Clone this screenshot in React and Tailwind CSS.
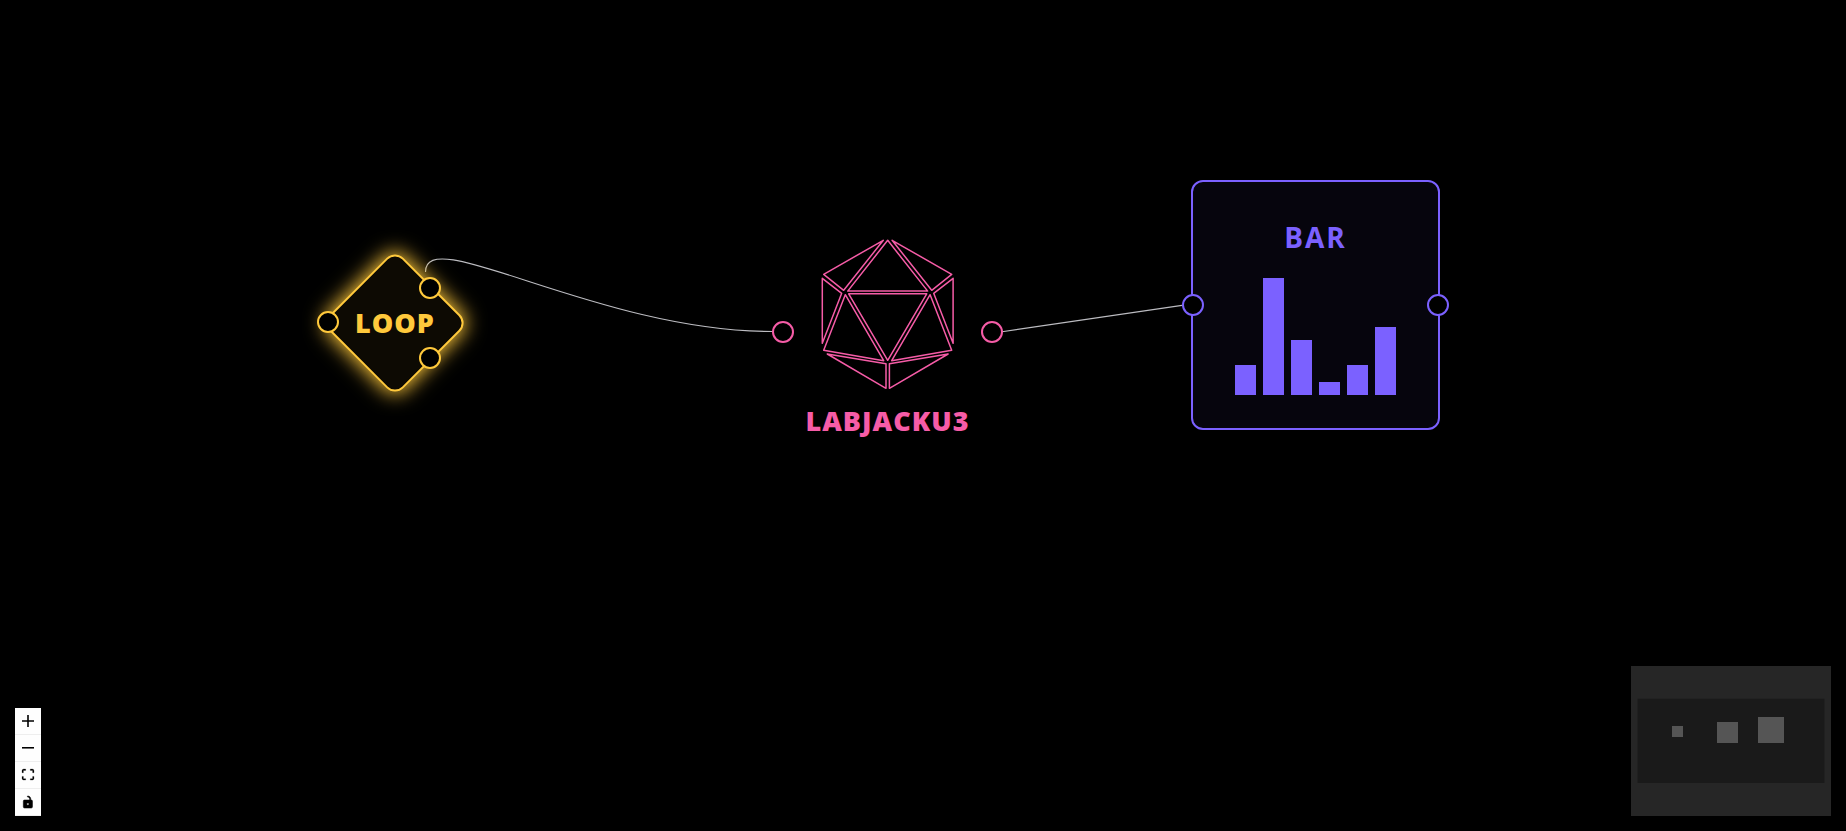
const handleBase = "absolute size-[22px] rounded-full border-2 bg-black";

function Handle({ className, label }) {
  return <span role="img" aria-label={label} className={`${handleBase} ${className}`} />;
}

function Edges() {
  return (
    <svg className="absolute left-0 top-0 size-full" fill="none" stroke="#bcbcc1" strokeWidth="1.100" aria-hidden="true">
      <path d="M425.500 272 C425.500 222 598 331.500 773 331.500" />
      <path d="M1002 331.700 L1182 305.400" />
    </svg>
  );
}

function LoopNode() {
  return (
    <section aria-label="Loop node" className="absolute left-[343px] top-[271px] grid size-[104px] place-items-center">
      <div className="absolute inset-0 rotate-45 rounded-xl border-2 border-[#ffc93c] bg-black shadow-[0_0_20px_2px_#ffc93c]">
        <div className="size-full rounded-[10px] bg-[#ffc93c]/5" />
      </div>
      <h2 className="relative font-['Open_Sans',sans-serif] text-[27px] font-extrabold leading-9 tracking-[1px] text-[#ffc93c]">LOOP</h2>
      <Handle label="Loop input" className="-left-[26px] top-[40px] border-[#ffc93c]" />
      <Handle label="Loop body" className="left-[76px] top-[6px] border-[#ffc93c]" />
      <Handle label="Loop end" className="left-[76px] top-[76px] border-[#ffc93c]" />
    </section>
  );
}

const faces = [
  "68.300,3.300 8.700,37.300 28.700,53.300",
  "7.300,41.300 26.700,56.300 7.300,106.300",
  "30.300,57.700 8.700,113.300 68.700,123.700",
  "12.300,117 71,126.700 71,151.300",
  "77.100,3.300 136.700,37.300 116.700,53.300",
  "138.100,41.300 118.700,56.300 138.100,106.300",
  "115.100,57.700 136.700,113.300 76.700,123.700",
  "133.100,117 74.400,126.700 74.400,151.300",
  "72.700,3.300 32.700,54.100 112.700,54.100",
  "33.700,56.800 111.700,56.800 72.700,123.300",
];

function LabJackNode() {
  return (
    <section aria-label="LabJack U3 node" className="absolute left-[772px] top-[237px] w-[231px]">
      <svg
        viewBox="0 0 145 156"
        className="mx-auto h-[156px] w-[145px]"
        fill="none"
        stroke="#f65ca7"
        strokeWidth="1.500"
        strokeLinejoin="round"
        aria-hidden="true"
      >
        {faces.map((points) => (
          <polygon key={points} points={points} />
        ))}
      </svg>
      <h2 className="mt-2 text-center font-['Open_Sans',sans-serif] text-[27px] font-extrabold leading-10 tracking-[1px] text-[#f65ca7]">LABJACKU3</h2>
      <Handle label="LabJack input" className="left-0 top-[84px] border-[#f65ca7]" />
      <Handle label="LabJack output" className="right-0 top-[84px] border-[#f65ca7]" />
    </section>
  );
}

const bars = [
  { id: "a", height: 30 },
  { id: "b", height: 117 },
  { id: "c", height: 55 },
  { id: "d", height: 13 },
  { id: "e", height: 30 },
  { id: "f", height: 68 },
];

function BarNode() {
  return (
    <section
      aria-label="Bar node"
      className="absolute left-[1191px] top-[180px] flex h-[250px] w-[249px] flex-col items-center rounded-xl border-2 border-[#7b61ff] bg-[#7b61ff]/5 pt-9"
    >
      <h2 className="font-['Open_Sans',sans-serif] text-[28px] font-bold leading-[38px] tracking-[2px] text-[#7b61ff]">BAR</h2>
      <div className="mt-[22px] flex h-[117px] items-end gap-[7px]">
        {bars.map((bar) => (
          <div key={bar.id} className="w-[21px] bg-[#7b61ff]" style={{ height: bar.height }} />
        ))}
      </div>
      <Handle label="Bar input" className="-left-[11px] top-[112px] border-[#7b61ff]" />
      <Handle label="Bar output" className="-right-[11px] top-[112px] border-[#7b61ff]" />
    </section>
  );
}

const controls = [
  {
    label: "zoom in",
    viewBox: "0 0 32 32",
    stroke: 0,
    d: "M32 18.133H18.133V32h-4.266V18.133H0v-4.266h13.867V0h4.266v13.867H32z",
  },
  { label: "zoom out", viewBox: "0 0 32 5", stroke: 0, d: "M0 0h32v4.200H0z" },
  {
    label: "fit view",
    viewBox: "0 0 32 30",
    stroke: 0.6,
    d: "M3.692 4.630c0-.530.400-.938.939-.938h5.215V0H4.708C2.130 0 0 2.054 0 4.630v5.216h3.692V4.631zM27.354 0h-5.200v3.692h5.170c.530 0 .984.400.984.939v5.215H32V4.631A4.624 4.624 0 0027.354 0zm.954 24.830c0 .532-.400.940-.939.940h-5.215v3.768h5.215c2.577 0 4.631-2.130 4.631-4.707v-5.139h-3.692v5.139zm-23.677.940c-.531 0-.939-.400-.939-.940v-5.138H0v5.139c0 2.577 2.130 4.707 4.708 4.707h5.138V25.770H4.631z",
  },
  {
    label: "toggle interactivity",
    viewBox: "0 0 25 32",
    stroke: 1.4,
    d: "M21.333 10.667H19.810V7.619C19.810 3.429 16.380 0 12.190 0c-4.114 1.828-1.370 2.133.305 2.438 1.676.305 4.420 2.590 4.420 5.181v3.048H3.047A3.056 3.056 0 000 13.714v15.238A3.056 3.056 0 003.048 32h18.285a3.056 3.056 0 003.048-3.048V13.714a3.056 3.056 0 00-3.048-3.047zM12.190 24.533a3.056 3.056 0 01-3.047-3.047 3.056 3.056 0 013.047-3.048 3.056 3.056 0 013.048 3.048 3.056 3.056 0 01-3.048 3.047z",
  },
];

function Controls() {
  return (
    <div className="absolute bottom-[15px] left-[15px] flex flex-col">
      {controls.map((control) => (
        <button
          key={control.label}
          type="button"
          aria-label={control.label}
          className="grid h-[27px] w-[26px] cursor-pointer place-items-center border-b border-[#eeeeee] bg-[#fefefe]"
        >
          <svg viewBox={control.viewBox} className="max-h-3 w-3 overflow-visible" fill="black" stroke="black" strokeWidth={control.stroke} aria-hidden="true">
            <path d={control.d} />
          </svg>
        </button>
      ))}
    </div>
  );
}

function MiniMap() {
  return (
    <svg className="absolute bottom-[15px] right-[15px] h-[150px] w-[200px] bg-[#1a1a1a]" viewBox="0 0 200 150" role="img" aria-label="Mini map">
      <rect x="41" y="60" width="11" height="11" fill="#555555" />
      <rect x="86" y="56" width="21" height="21" fill="#555555" />
      <rect x="127" y="51" width="26" height="26" fill="#555555" />
      <path d="M0 0h200v150H0z M6.500 32.700v84.300h187V32.700z" fill="#262626" fillRule="evenodd" />
    </svg>
  );
}

export default function App() {
  return (
    <main className="relative min-h-screen w-full overflow-hidden bg-black">
      <Edges />
      <LoopNode />
      <LabJackNode />
      <BarNode />
      <Controls />
      <MiniMap />
    </main>
  );
}
